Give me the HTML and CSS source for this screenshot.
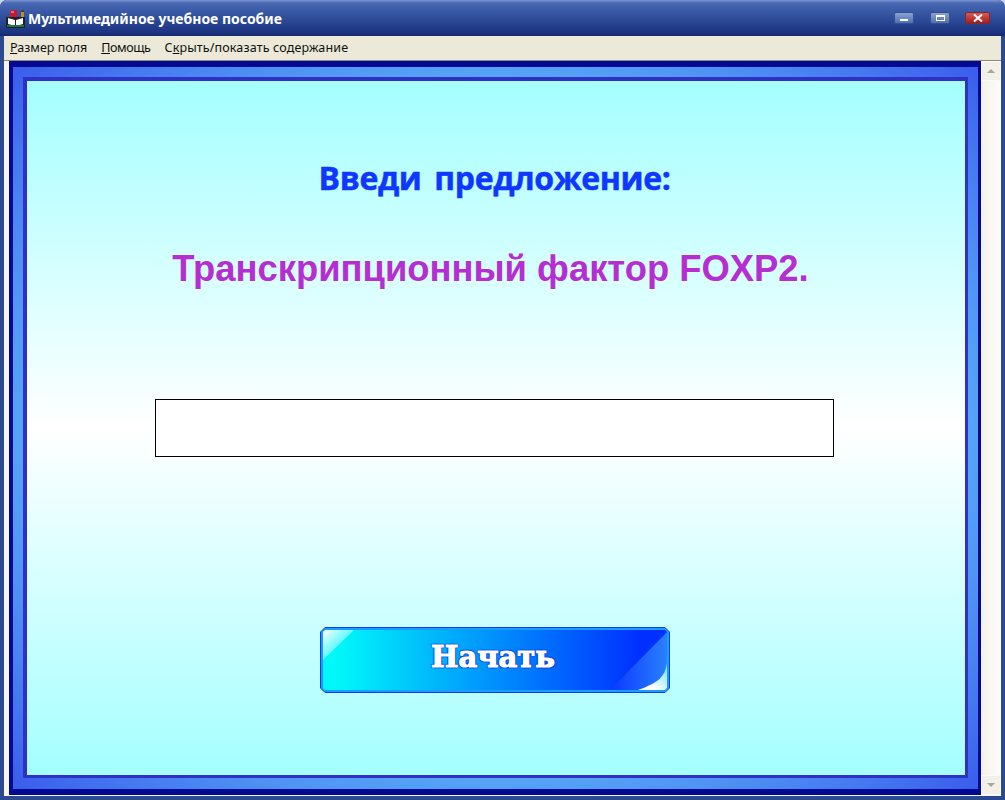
FILE: index.html
```html
<!DOCTYPE html>
<html lang="ru">
<head>
	<meta charset="utf-8">
	<title>Мультимедийное учебное пособие</title>
	<link rel="stylesheet" href="styles.css">
</head>
<body>
<section class="window">
	<div class="titlebar">
		<svg class="app-icon" width="20" height="20" viewBox="0 0 20 20">
			<rect x="4" y="1" width="7" height="8" rx="2" fill="#c8182e"/>
			<rect x="5" y="2" width="3" height="2" fill="#ee6a70"/>
			<rect x="15" y="2" width="3" height="8" fill="#b8902a"/>
			<rect x="15" y="1" width="3" height="2" fill="#5a3a20"/>
			<rect x="0" y="8" width="19" height="11" fill="#1a2420"/>
			<path d="M2 9 L9 11 V17 L2 15Z M10 11 L17 9 V15 L10 17Z" fill="#fff"/>
			<rect x="1" y="16" width="17" height="2" fill="#1d7a44"/>
		</svg>
		<div class="title">Мультимедийное учебное пособие</div>
		<div class="controls">
			<div class="ctl"><i class="min"></i></div>
			<div class="ctl"><i class="max"></i></div>
			<div class="ctl close">
				<svg width="10" height="8" viewBox="0 0 10 8"><path d="M1 0.5 L9 7.5 M9 0.5 L1 7.5" stroke="#fff" stroke-width="2"/></svg>
			</div>
		</div>
	</div>
	<div class="menu">
		<span><u>Р</u>азмер поля</span>
		<span class="short"><u>П</u>омощь</span>
		<span class="wide">С<u>к</u>рыть/показать содержание</span>
	</div>
	<div class="client">
		<div class="stage">
			<div class="ring">
				<div class="panel">
					<h1 class="prompt">Введи предложение:</h1>
					<h2 class="sentence">Транскрипционный фактор FOXP2.</h2>
					<div class="answer"></div>
					<div class="start">
						<svg class="start-bg" width="350" height="66" viewBox="0 0 350 66">
							<defs>
								<linearGradient id="fill" x1="0" y1="0" x2="1" y2="0">
									<stop offset="0.04" stop-color="#00f8fa"/>
									<stop offset="0.92" stop-color="#0030ff"/>
								</linearGradient>
								<linearGradient id="shine" x1="0" y1="0" x2="1" y2="1">
									<stop offset="0" stop-color="#ffffff"/>
									<stop offset="0.7" stop-color="#20f6ff"/>
								</linearGradient>
								<linearGradient id="band" x1="0" y1="0" x2="1" y2="0">
									<stop offset="0" stop-color="#0a38ff"/>
									<stop offset="1" stop-color="#2a80ff"/>
								</linearGradient>
								<linearGradient id="corner" x1="0" y1="1" x2="1" y2="0">
									<stop offset="0.3" stop-color="#ffffff"/>
									<stop offset="1" stop-color="#70e0ff"/>
								</linearGradient>
							</defs>
							<path d="M5 0.5 H345 L349.5 5 V61 L345 65.5 H5 L0.5 61 V5Z" fill="#1c9cff" stroke="#0a40f0"/>
							<path d="M5 3 H345 L347 5 V61 L345 63 H5 L3 61 V5Z" fill="url(#fill)"/>
							<path d="M347 5 V61 L345 63 H290Z" fill="url(#band)"/>
							<path d="M347 36 C345 50 338 56 318 63 H345 L347 61Z" fill="url(#corner)"/>
							<path d="M5 3 H34 L3 33 V5Z" fill="url(#shine)"/>
						</svg>
						<span class="start-label">Начать</span>
					</div>
				</div>
			</div>
		</div>
		<div class="scrollbar">
			<div class="arrow"><i class="up"></i></div>
			<div class="arrow"><i class="down"></i></div>
		</div>
	</div>
</section>
</body>
</html>
```

FILE: styles.css
```css
html, body {
	margin: 0;
	padding: 0;
}
body {
	width: 1005px;
	height: 800px;
	overflow: hidden;
	background: #cfd6e6;
}
.window {
	width: 1005px;
	height: 800px;
	display: flex;
	flex-direction: column;
	box-sizing: border-box;
	background: #2b4a90;
	border-radius: 7px 7px 0 0;
	padding: 0 4px 4px 4px;
}
.titlebar {
	height: 36px;
	flex: none;
	box-sizing: border-box;
	margin: 0 -4px;
	padding: 0 15px 0 6px;
	display: flex;
	align-items: center;
	border-radius: 7px 7px 0 0;
	background: linear-gradient(#7d95d2 0, #4a69b4 3px, #3c5ba8 10px, #2c4a96 20px, #1c3280 33px, #16286e 36px);
}
.app-icon {
	margin-top: 1px;
}
.title {
	flex: 1;
	margin-left: 2px;
	color: #fff;
	font: bold 14px "Noto Sans", sans-serif;
}
.controls {
	display: flex;
	gap: 16px;
	align-items: center;
}
.ctl {
	width: 18px;
	height: 10px;
	border: 1px solid #33508f;
	border-radius: 2px;
	background: linear-gradient(#8aa2d2, #4f6fb0);
	display: flex;
	align-items: center;
	justify-content: center;
}
.ctl.close {
	width: 23px;
	background: linear-gradient(#d85a50, #a81c1c);
	border-color: #7a2a3a;
	margin-left: -1px;
}
.ctl .min {
	width: 8px;
	height: 2px;
	margin-top: 3px;
	background: #fff;
}
.ctl .max {
	width: 7px;
	height: 3px;
	border: 1px solid #fff;
	border-top-width: 2px;
}
.menu {
	height: 25px;
	flex: none;
	box-sizing: border-box;
	padding: 0 0 1px 6px;
	display: flex;
	gap: 14px;
	align-items: center;
	background: #ece9d8;
	color: #111;
	font: 12.5px "Noto Sans", sans-serif;
	border-bottom: 1px solid #8d8a78;
}
.menu .short {
	letter-spacing: -0.4px;
}
.menu .wide {
	letter-spacing: 0.15px;
}
.client {
	flex: 1;
	min-height: 0;
	display: flex;
	background: #f7f5ec;
	padding: 0 0 1px 5px;
}
.stage {
	flex: 1;
	background: #020a92;
	padding: 6px 3px 6px 4px;
	display: flex;
}
.ring {
	flex: 1;
	padding: 10px 10px 11px 10px;
	background: radial-gradient(ellipse farthest-corner, #62c4fb 55%, #3a5cec 100%);
	display: flex;
}
.panel {
	flex: 1;
	box-sizing: border-box;
	border: solid #3030c4;
	border-width: 4px 3px 3px 4px;
	background: linear-gradient(#a4ffff 0, #ffffff 50%, #a4ffff 100%);
	display: flex;
	flex-direction: column;
	align-items: center;
	padding-top: 74px;
}
.prompt {
	margin: 0 0 0 -3px;
	color: #0f37ff;
	font: bold 32px/45px "Open Sans", sans-serif;
	letter-spacing: -0.4px;
	word-spacing: 5px;
	-webkit-text-stroke: 0.5px #0f37ff;
}
.sentence {
	margin: 45px 0 0 -11px;
	color: #b62ed2;
	font: bold 36.4px/48px "Liberation Sans", sans-serif;
}
.answer {
	width: 677px;
	height: 56px;
	margin: 106px 0 0 -3px;
	border: 1px solid #000;
	background: #fff;
}
.start {
	position: relative;
	width: 350px;
	height: 66px;
	margin: 170px 0 0 -2px;
	display: flex;
	align-items: center;
	justify-content: center;
}
.start-bg {
	position: absolute;
	left: 0;
	top: 0;
}
.start-label {
	position: relative;
	margin: -6px 0 0 -4px;
	color: #fff;
	font: bold 29px "DejaVu Serif", serif;
	-webkit-text-stroke: 1.2px #fff;
	text-shadow: 0 0 2px #0a30e0, 1px 1px 1px #0a30e0, -1px -1px 1px #0a30e0, 1px -1px 1px #0a30e0, -1px 1px 1px #0a30e0;
}
.scrollbar {
	width: 20px;
	flex: none;
	display: flex;
	flex-direction: column;
	justify-content: space-between;
	background: linear-gradient(90deg, #f3f1ea, #fdfdfa);
}
.arrow {
	height: 20px;
	background: #f2f0e8;
	border: 1px solid #fbfaf6;
	box-sizing: border-box;
	display: flex;
	align-items: center;
	justify-content: center;
}
.arrow i {
	width: 0;
	height: 0;
	border-left: 4px solid transparent;
	border-right: 4px solid transparent;
}
.arrow .up {
	border-bottom: 4px solid #a8a698;
}
.arrow .down {
	border-top: 4px solid #a8a698;
}
```
